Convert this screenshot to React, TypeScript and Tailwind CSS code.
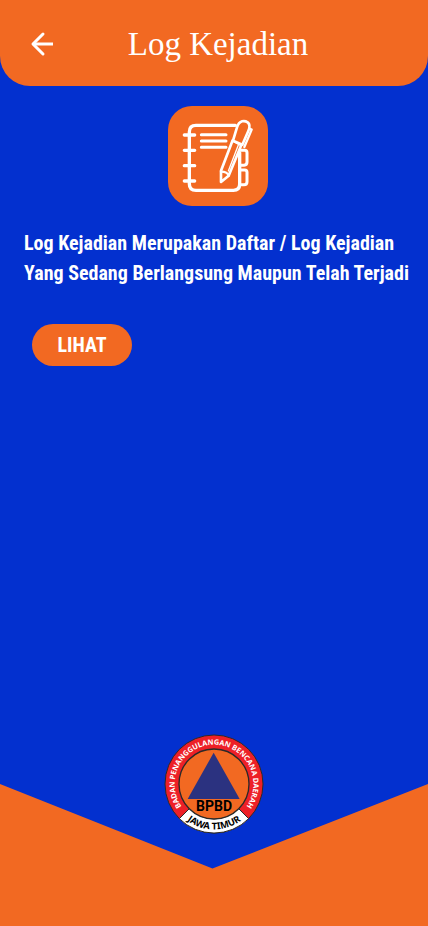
import React from "react";

function BackArrow() {
  return (
    <svg viewBox="0 0 36 36" className="size-9" fill="none" stroke="white" strokeWidth="3" aria-hidden="true">
      <path d="M29 18H9" />
      <path d="M19 8 9 18l10 10" strokeLinecap="round" strokeLinejoin="round" />
    </svg>
  );
}

function NotebookIcon() {
  return (
    <svg viewBox="24 24 300 300" className="size-full" fill="none" stroke="white" strokeWidth="9" strokeLinecap="round" strokeLinejoin="round" aria-hidden="true">
      <path d="M226 82H108Q88 82 88 102V257Q88 277 108 277H220Q239 277 239 258V164" strokeWidth="10" />
      <path d="M73 111H104M73 157H104M73 203H104M73 249H104" strokeWidth="10" />
      <path d="M124 110H198M124 129H198M124 148H198" />
      <path d="M242 157H254Q261 157 261 164V192Q261 201 252 202H241M241 216H254Q261 216 261 223V251Q261 260 252 260H241" />
      <path d="M218 127 183 218V252L206 233 244 141Z" fill="#f26922" strokeWidth="8" />
      <path d="M219 128 231 88C238 66 254 67 263 73 272 80 268 92 265 99L247 140Z" fill="#f26922" strokeWidth="8" />
      <path d="M183 221Q202 221 206 233" strokeWidth="7" />
      <path d="M235 141 205 219" strokeWidth="4" />
      <path d="M268 92 275 95 253 147" strokeWidth="7" />
    </svg>
  );
}

function BpbdLogo() {
  return (
    <svg viewBox="24 24 300 300" className="size-[100px]" role="img" aria-label="BPBD Jawa Timur">
      <defs>
        <path id="ring-top" d="M80.5 246.1A118 118 0 1 1 267.5 246.1" />
        <path id="ring-bottom" d="M77 270A137 137 0 0 0 271 270" />
      </defs>
      <circle cx="174" cy="174" r="147" fill="#ed2027" stroke="#2b2a29" strokeWidth="3" />
      <path d="M70 278A147 147 0 0 0 278 278L248 248A105 105 0 0 1 100 248Z" fill="white" stroke="#2b2a29" strokeWidth="3" />
      <circle cx="174" cy="174" r="105" fill="#f26922" stroke="#2b2a29" strokeWidth="4" />
      <path d="M173 80 251 219H95Z" fill="#2b3280" />
      <text x="174" y="254" textAnchor="middle" className="fill-black font-['Roboto',sans-serif] text-[42px] font-bold">BPBD</text>
      <text textAnchor="middle" className="fill-white font-['Noto_Sans',sans-serif] text-[22px] font-bold">
        <textPath href="#ring-top" startOffset="50%">BADAN PENANGGULANGAN BENCANA DAERAH</textPath>
      </text>
      <text textAnchor="middle" className="fill-black font-['Noto_Sans',sans-serif] text-[28px] font-bold">
        <textPath href="#ring-bottom" startOffset="50%">JAWA TIMUR</textPath>
      </text>
    </svg>
  );
}

export default function App() {
  return (
    <div className="flex min-h-screen flex-col bg-[#0330cf] text-white">
      <header className="grid grid-cols-[36px_1fr_36px] items-center rounded-b-[30px] bg-[#f26922] pt-5 pr-4 pb-[18px] pl-6">
        <button type="button" aria-label="Kembali">
          <BackArrow />
        </button>
        <h1 className="text-center font-['Liberation_Serif',serif] text-[33px] leading-[48px]">Log Kejadian</h1>
      </header>

      <main className="flex grow flex-col pt-5 pr-4 pl-6">
        <div className="size-[100px] self-center rounded-3xl bg-[#f26922]">
          <NotebookIcon />
        </div>
        <p className="mt-[22px] font-['Roboto_Condensed','Liberation_Sans_Narrow',sans-serif] text-[20px] leading-[30px] font-bold">
          Log Kejadian Merupakan Daftar / Log Kejadian Yang Sedang Berlangsung Maupun Telah Terjadi
        </p>
        <button type="button" className="mt-9 ml-2 h-[42px] w-[100px] rounded-full bg-[#f26922] font-['Roboto_Condensed','Liberation_Sans_Narrow',sans-serif] text-[20px] font-bold">
          LIHAT
        </button>
      </main>

      <footer className="grid">
        <svg viewBox="0 0 428 142" preserveAspectRatio="none" className="col-start-1 row-start-1 mt-[50px] h-[142px] w-full" aria-hidden="true">
          <path d="M0 0 212.500 84.500 428 0V142H0Z" fill="#f26922" />
        </svg>
        <div className="z-10 col-start-1 row-start-1 justify-self-center">
          <BpbdLogo />
        </div>
      </footer>
    </div>
  );
}
